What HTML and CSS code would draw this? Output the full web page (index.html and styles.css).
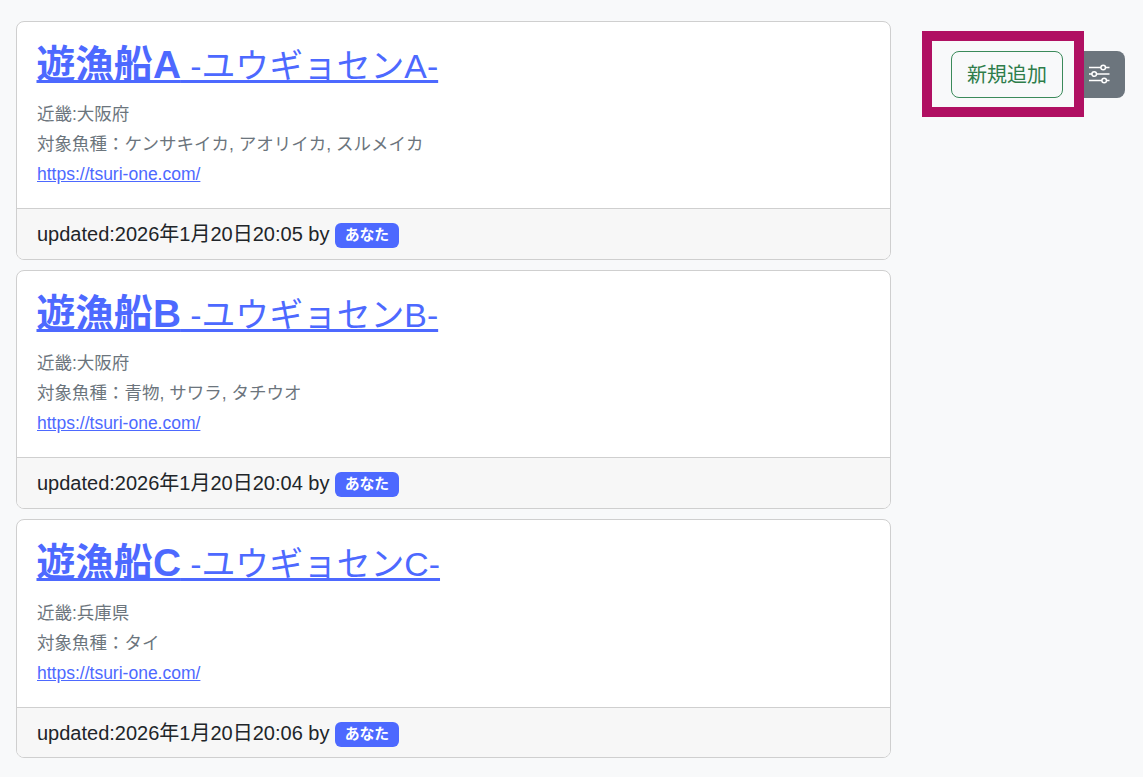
FILE: index.html
```html
<!DOCTYPE html>
<html lang="ja">
<head>
    <meta charset="UTF-8">
    <meta name="viewport" content="width=device-width, initial-scale=1.0">
    <title>遊漁船一覧</title>
    <link rel="stylesheet" href="styles.css">
</head>
<body>
    <div class="container">
        <!-- 遊漁船リスト -->
        <div class="card-list">
            <div class="card">
                <div class="card-body">
                    <h1 class="card-title"><a href="#"><strong>遊漁船A</strong><small> -ユウギョセンA-</small></a></h1>
                    <p>近畿:大阪府</p>
                    <p>対象魚種：ケンサキイカ, アオリイカ, スルメイカ</p>
                    <p><a href="#">https://tsuri-one.com/</a></p>
                </div>
                <div class="card-footer">updated:2026年1月20日20:05 by <span class="badge">あなた</span></div>
            </div>
            <div class="card">
                <div class="card-body">
                    <h1 class="card-title"><a href="#"><strong>遊漁船B</strong><small> -ユウギョセンB-</small></a></h1>
                    <p>近畿:大阪府</p>
                    <p>対象魚種：青物, サワラ, タチウオ</p>
                    <p><a href="#">https://tsuri-one.com/</a></p>
                </div>
                <div class="card-footer">updated:2026年1月20日20:04 by <span class="badge">あなた</span></div>
            </div>
            <div class="card">
                <div class="card-body">
                    <h1 class="card-title"><a href="#"><strong>遊漁船C</strong><small> -ユウギョセンC-</small></a></h1>
                    <p>近畿:兵庫県</p>
                    <p>対象魚種：タイ</p>
                    <p><a href="#">https://tsuri-one.com/</a></p>
                </div>
                <div class="card-footer">updated:2026年1月20日20:06 by <span class="badge">あなた</span></div>
            </div>
        </div>

        <!-- 操作ボタン -->
        <div class="actions">
            <div class="highlight">
                <button class="btn-add">新規追加</button>
            </div>
            <button class="btn-filter" aria-label="絞り込み">
                <svg width="22" height="22" viewBox="0 0 22 22" fill="none" stroke="#fff" stroke-width="1.5">
                    <path d="M1 4.5h12M17.5 4.5h4M1 11h3M8.5 11h13M1 17.5h13M18.5 17.5h3"/>
                    <circle cx="15.2" cy="4.5" r="2.3"/>
                    <circle cx="6.2" cy="11" r="2.3"/>
                    <circle cx="16.2" cy="17.5" r="2.3"/>
                </svg>
            </button>
        </div>
    </div>
</body>
</html>
```

FILE: styles.css
```css
body {
    font-family: "Liberation Sans", "Noto Sans CJK JP", sans-serif;
    font-size: 16px;
    line-height: 1.5;
    color: #212529;
    background-color: #f8f9fa;
    margin: 0;
}
a {
    color: #4d69ff;
}
.container {
    display: flex;
    align-items: flex-start;
    padding: 20.5px 18px 17px 16px;
}
.card-list {
    width: 875px;
    display: flex;
    flex-direction: column;
    gap: 10px;
}
.card {
    background-color: #fff;
    border: 1px solid #cfcfcf;
    border-radius: 8px;
    overflow: hidden;
}
.card-body {
    padding: 20px 20px 19px;
}
.card-title {
    height: 46px;
    font-size: 38.8px;
    font-weight: 400;
    line-height: 46px;
    margin: 0 0 11.5px -0.5px;
}
.card-title small {
    font-size: 33.8px;
}
.card-body p {
    margin: 0;
    font-size: 17.5px;
    line-height: 30px;
    color: #6c757d;
}
.card-footer {
    height: 50.8px;
    box-sizing: border-box;
    padding: 0 20px;
    font-size: 20px;
    line-height: 50px;
    color: #212529;
    background-color: #f7f7f7;
    border-top: 1px solid #cfcfcf;
}
.badge {
    display: inline-block;
    padding: 5px 9.65px;
    font-size: 14.85px;
    font-weight: 700;
    line-height: 15px;
    vertical-align: 1px;
    color: #fff;
    background-color: #4d69ff;
    border-radius: 6px;
}
.actions {
    display: flex;
    align-items: center;
    margin: 10.6px 0 0 31px;
}
.highlight {
    display: flex;
    justify-content: flex-end;
    align-items: center;
    box-sizing: border-box;
    width: 162px;
    height: 86px;
    padding-right: 11px;
    border: 10px solid #b01062;
}
.btn-add {
    width: 112px;
    height: 47px;
    padding: 0 0 2px;
    font-family: inherit;
    font-size: 20px;
    color: #2e7d4a;
    background-color: transparent;
    border: 1px solid #3a8a5a;
    border-radius: 8px;
}
.btn-filter {
    display: flex;
    align-items: center;
    width: 41px;
    height: 47px;
    padding: 0 0 0 4px;
    background-color: #6c757d;
    border: none;
    border-radius: 0 8px 8px 0;
}
```
